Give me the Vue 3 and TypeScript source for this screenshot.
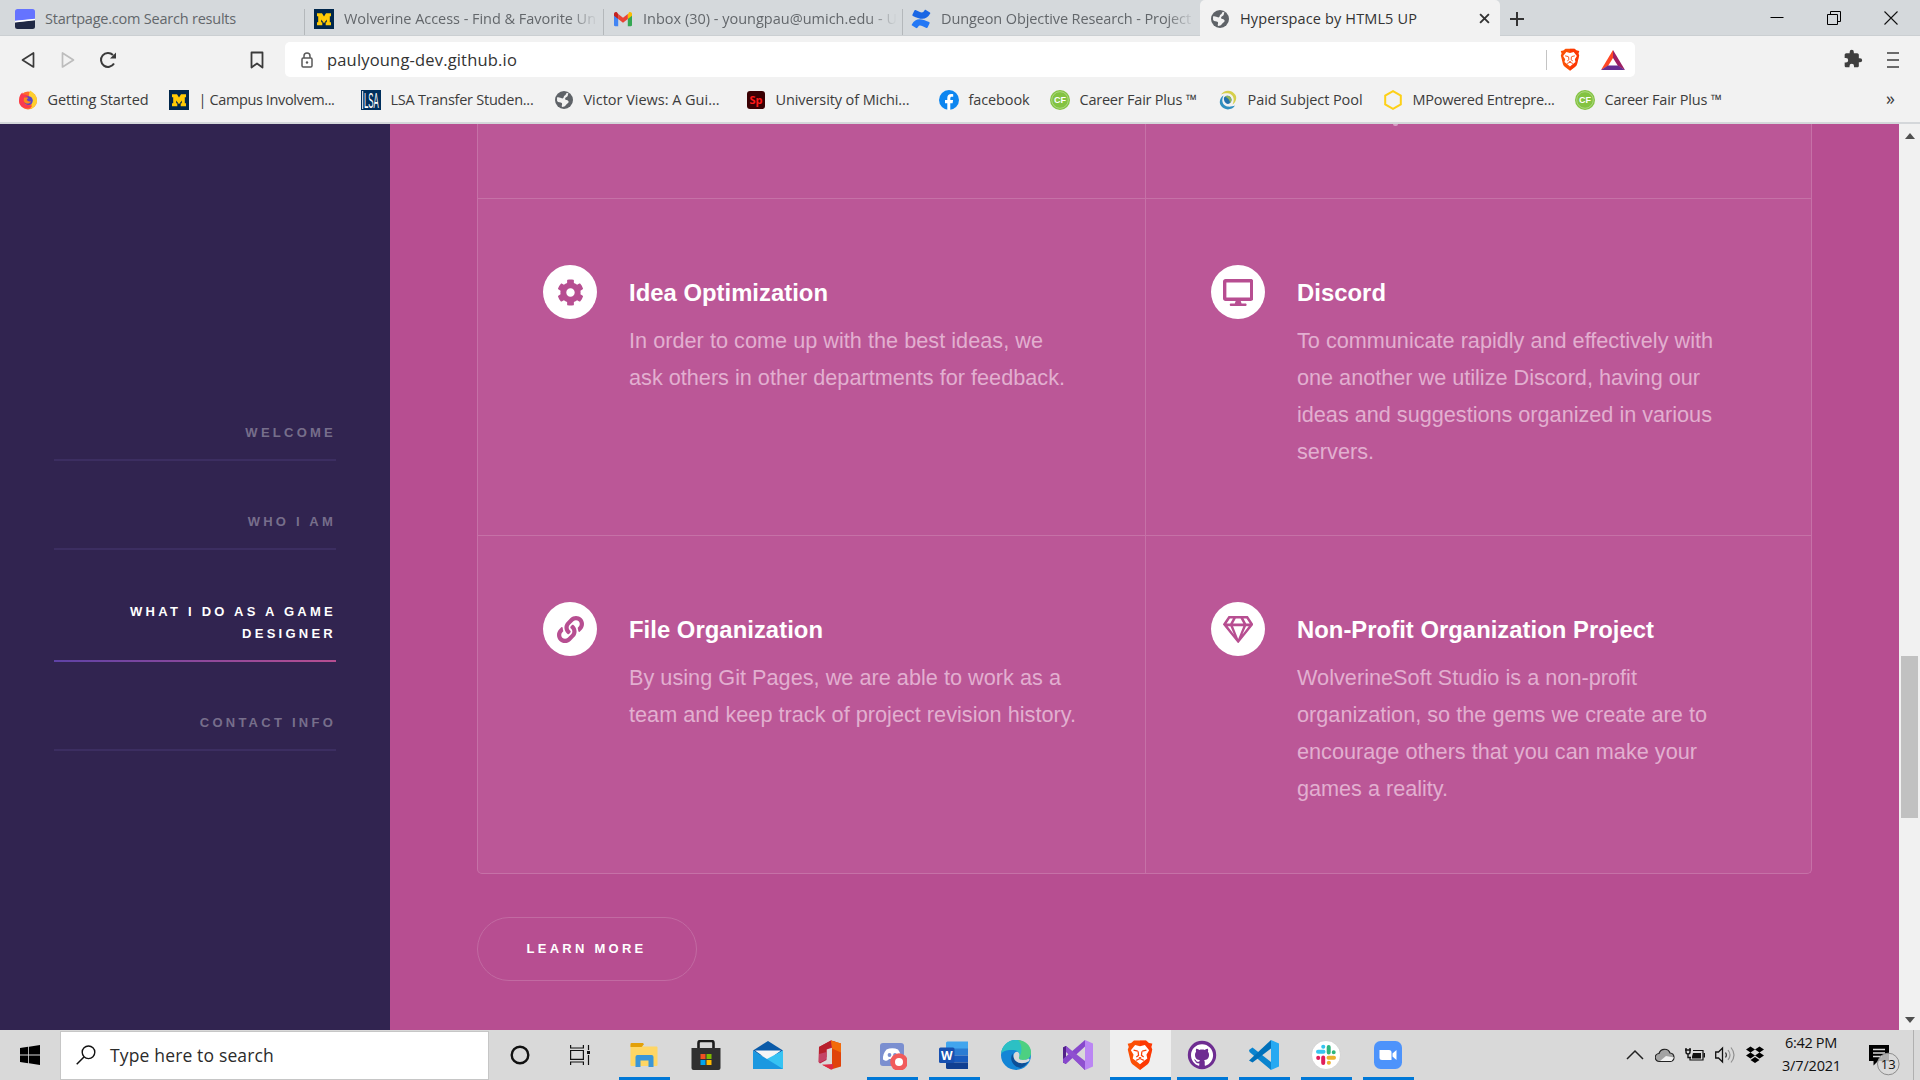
<script setup lang="ts">
import type { Directive } from 'vue'

interface Tab { title: string; icon: string; w: number; active?: boolean }
interface Bookmark { title: string; icon: string; slot: number; w: number }
interface Feature { title: string; icon: string; box: string; lines: string[]; w: number[]; tw: number }
interface TaskApp { icon: string; running: boolean; active?: boolean }

// Spreads the letters so that a label takes the given width in pixels.
const vFit: Directive<HTMLElement, number> = {
  mounted(el, { value }) {
    const natural = el.getBoundingClientRect().width
    const count = (el.textContent ?? '').length
    if (count && value) el.style.letterSpacing = `${((value - natural) / count).toFixed(3)}px`
  },
}

const globe = '<circle cx="10" cy="10" r="9" fill="#5f6368"/><path d="M3 7.500c2.500-.6 3.400.8 5.200.9 2 .1 1-2.300 2.600-2.900 1.400-.5.700-2 2.200-2.700l1.500.800c-1 .9-.2 1.900-1.200 2.900-.9 1-2.300 1-2.200 2.400.200 1.500 3 .600 3.500 2.500.4 1.500-1.800 2-2.500 3.300-.8 1.500-2.500 2.200-4 2.300-1.200-1.200.8-2.700-.3-3.900-1.300-1.200-3.500-.2-4.700-2z" fill="#f2f2f2"/>'
const block = '<rect width="20" height="20" fill="#00274c"/><path d="M3 4.200h5l2 3.300 2-3.300h5v3h-1.200v6H17v3h-5.300v-3h1.100v-2.700L10 14.200 7.200 10.500v2.700h1.100v3H3v-3h1.200v-6H3z" fill="#ffcb05"/>'
const lion = '<path d="M20 2.800 17.400.5H6.600L4 2.800.9 3.300l1 3-.9 2.300 2.500 10.200c.4 1.500 1.300 2.700 2.600 3.600L12 27l5.900-4.600c1.300-.9 2.200-2.100 2.600-3.600L23 8.600l-.9-2.300 1-3z" fill="#fb5006"/><path d="M12 .5h5.400L20 2.800l3.100.5-1 3 .9 2.300-2.500 10.200c-.4 1.500-1.300 2.700-2.600 3.600L12 27z" fill="#ff2000" opacity=".5"/><path d="M12 5.600 7.600 4.600 3.800 9.300l2.400 4-.8 3.300 3.400 2.600 3.200 2.600 3.200-2.600 3.400-2.600-.8-3.300 2.400-4-3.800-4.700z" fill="#fff"/><path d="M6.200 9.100 10 10M17.800 9.100 14 10M10.300 10.200l.4 3.600-2 1.400M13.700 10.200l-.4 3.600 2 1.400M8.600 18.300l3.400-1.600 3.400 1.600" fill="none" stroke="#fb4208" stroke-width="1.100"/><path d="m10.600 15.400h2.800L12 16.700z" fill="#fb4208"/>'

const icons: Record<string, string> = {
  startpage: '<path d="M0 2.500Q0 0 2.500 0h15Q20 0 20 2.500V10L0 12z" fill="#6573ff"/><path d="M0 13.200 20 11v6.500Q20 20 17.500 20h-15Q0 20 0 17.500z" fill="#202945"/><path d="M0 11.700 20 9.800v1.500L0 13.600z" fill="#fff"/>',
  block,
  gmail: '<path d="M1 4.500V16c0 .8.600 1.200 1.200 1.200h3V8.500z" fill="#4285f4"/><path d="M19 4.500V16c0 .8-.6 1.200-1.200 1.200h-3V8.500z" fill="#34a853"/><path d="M14.800 5.500V10L19 6.800V5c0-1.800-1.800-2.600-3.100-1.600z" fill="#fbbc04"/><path d="M5.200 10V5.100L10 8.700l4.800-3.600V10L10 13.700z" fill="#ea4335"/><path d="M1 5v1.800L5.200 10V5.100L4.100 3.400C2.800 2.400 1 3.200 1 5z" fill="#c5221f"/>',
  confluence: '<path d="M.8 15.400c-.3.500-.2.900.3 1.200l4 2.500c.5.300 1 .1 1.300-.3 1.600-2.700 2.800-2.600 5.300-1.500l3.700 1.700c.5.200 1 0 1.200-.4l2-4.300c.2-.5 0-1-.5-1.200-7.700-3.600-13.200-4.800-17.300 2.300z" fill="#2478f5"/><path d="M19.200 4.600c.3-.5.200-.9-.3-1.200l-4-2.500c-.5-.3-1-.1-1.300.3-1.600 2.700-2.800 2.600-5.300 1.500L4.600 1c-.5-.2-1 0-1.200.4l-2 4.300c-.2.500 0 1 .5 1.200 7.700 3.600 13.200 4.800 17.300-2.300z" fill="#1a66e4"/>',
  globe,
  firefox: '<circle cx="10" cy="10.500" r="9" fill="#ff6a2b"/><path d="M12 .5c4 2.300 7.500 6 7 10.800-.5 4-3.500 7-7 8 3-4 1.500-7 0-9.300S10.500 4 12 .5z" fill="#ffcf2e"/><path d="M1.500 7c.5-2 1.500-3.500 2.800-4.600L5 4.600c3-.6 5.500.6 6.500 3.400L7 14.500l7 1.500c-4 4-12 2.500-13-4.500z" fill="#fb3a4e"/><circle cx="10.500" cy="10.600" r="4.300" fill="#5b45c9"/><path d="M6 7.800c2-1 3.700-.5 4.600.5-1.400.4-1.800 1-1.800 2 1.200.5 1.700 1.800 4.200.9-.7 2.900-5.600 3.600-7.300-.2z" fill="#ff8b16"/>',
  lsa: '<rect width="20" height="20" fill="#002f5d"/><path d="M1.700 1v18" stroke="#fff"/><text transform="translate(3 17.500) scale(.98 2.650)" font-family="Liberation Sans, sans-serif" font-size="8" fill="#fff">LSA</text>',
  sp: '<rect x="1" y="1" width="18" height="18" rx="3" fill="#3a0003"/><text x="10" y="14" text-anchor="middle" font-family="Open Sans, sans-serif" font-weight="700" font-size="11" fill="#ff1a1a">Sp</text>',
  facebook: '<circle cx="10" cy="10" r="10" fill="#0d86f0"/><path d="M8.300 20v-6.800H6V10h2.300V8c0-2.700 1.500-4 3.900-4 .9 0 1.700.100 2 .2v2.600h-1.400c-1.100 0-1.500.6-1.500 1.500V10h2.800l-.5 3.200h-2.300V20z" fill="#fff"/>',
  cf: '<circle cx="10" cy="10" r="10" fill="#83c341"/><circle cx="10" cy="10" r="8.300" fill="none" stroke="#b8dc92" stroke-width=".8"/><text x="10" y="13.300" text-anchor="middle" font-family="Liberation Sans, sans-serif" font-weight="700" font-size="9" fill="#fff">CF</text>',
  swirl: '<path d="M3 4.500C6-.5 14-1 17.500 5c2 4-.500 8-3 9.500 2-4 1.500-8-1.500-10-3-2-7-1-10 0z" fill="#d6cf4b"/><path d="M17 15.500c-3 5-11 5.500-14.500-.5-2-4 .5-8 3-9.500-2 4-1.500 8 1.500 10 3 2 7 1 10 0z" fill="#2f8fc0"/><path d="M6 7.500c2.500-3 7-2 7.500 2 0 2.500-1.500 4-3.500 4.500-3-.5-4.500-3.500-4-6.500z" fill="#2371ad"/><path d="M7 6.500c3-1.500 6-.5 6.500 3 0 1.500-.5 2.500-1.500 3.500 0-3-2-5-5-6.500z" fill="#8fb45a"/>',
  hexagon: '<path d="M10 1.200 17.800 5.600v8.800L10 18.800 2.200 14.400V5.600z" fill="none" stroke="#fdd017" stroke-width="2"/>',
  lion,
  cog: '<path d="M487.400 315.700l-42.600-24.600c4.300-23.200 4.300-47 0-70.200l42.600-24.600c4.900-2.800 7.100-8.600 5.500-14-11.100-35.600-30-67.800-54.700-94.600-3.800-4.100-10-5.100-14.800-2.300L380.800 110c-17.900-15.400-38.500-27.300-60.800-35.100V25.800c0-5.600-3.900-10.500-9.400-11.700-36.700-8.200-74.300-7.800-109.200 0-5.500 1.200-9.400 6.100-9.400 11.700V75c-22.200 7.900-42.800 19.800-60.800 35.100L88.700 85.500c-4.900-2.800-11-1.900-14.800 2.300-24.700 26.700-43.600 58.900-54.700 94.600-1.700 5.400.6 11.200 5.500 14L67.300 221c-4.300 23.200-4.300 47 0 70.200l-42.600 24.600c-4.900 2.800-7.100 8.600-5.500 14 11.100 35.600 30 67.800 54.700 94.600 3.800 4.100 10 5.100 14.800 2.300l42.600-24.600c17.900 15.400 38.500 27.300 60.800 35.100v49.200c0 5.600 3.900 10.500 9.400 11.700 36.700 8.200 74.300 7.800 109.200 0 5.500-1.200 9.400-6.100 9.400-11.700v-49.200c22.200-7.900 42.800-19.800 60.800-35.100l42.600 24.600c4.900 2.800 11 1.900 14.800-2.300 24.700-26.700 43.600-58.900 54.700-94.600 1.500-5.500-.7-11.300-5.600-14.100zM256 336c-44.100 0-80-35.900-80-80s35.900-80 80-80 80 35.900 80 80-35.900 80-80 80z"/>',
  desktop: '<path d="M528 0H48C21.500 0 0 21.500 0 48v320c0 26.500 21.500 48 48 48h192l-16 48h-72c-13.300 0-24 10.700-24 24s10.700 24 24 24h272c13.300 0 24-10.700 24-24s-10.700-24-24-24h-72l-16-48h192c26.500 0 48-21.500 48-48V48c0-26.500-21.500-48-48-48zm-16 352H64V64h448v288z"/>',
  link: '<path d="M326.612 185.391c59.747 59.809 58.927 155.698.36 214.590-.11.12-.24.25-.36.37l-67.200 67.200c-59.270 59.270-155.699 59.262-214.960 0-59.270-59.260-59.270-155.700 0-214.960l37.106-37.106c9.840-9.840 26.786-3.300 27.294 10.606.648 17.722 3.826 35.527 9.690 52.721 1.986 5.822.567 12.262-3.783 16.612l-13.087 13.087c-28.026 28.026-28.905 73.660-1.155 101.960 28.024 28.579 74.086 28.749 102.325.51l67.200-67.190c28.191-28.191 28.073-73.757 0-101.830-3.701-3.694-7.429-6.564-10.341-8.569a16.037 16.037 0 0 1-6.947-12.606c-.396-10.567 3.348-21.456 11.698-29.806l21.054-21.055c5.521-5.521 14.182-6.199 20.584-1.731a152.482 152.482 0 0 1 20.522 17.197zM467.547 44.449c-59.261-59.262-155.690-59.270-214.960 0l-67.200 67.200c-.12.12-.25.25-.36.37-58.566 58.892-59.387 154.781.36 214.590a152.454 152.454 0 0 0 20.521 17.196c6.402 4.468 15.064 3.789 20.584-1.731l21.054-21.055c8.350-8.350 12.094-19.239 11.698-29.806a16.037 16.037 0 0 0-6.947-12.606c-2.912-2.005-6.640-4.875-10.341-8.569-28.073-28.073-28.191-73.639 0-101.830l67.200-67.190c28.239-28.239 74.300-28.069 102.325.51 27.750 28.300 26.872 73.934-1.155 101.960l-13.087 13.087c-4.350 4.350-5.769 10.790-3.783 16.612 5.864 17.194 9.042 34.999 9.690 52.721.509 13.906 17.454 20.446 27.294 10.606l37.106-37.106c59.271-59.259 59.271-155.699.001-214.959z"/>',
  gem: '<path d="M464 0H112c-4 0-7.700 2-9.900 5.400L2 152.800c-2.900 4.400-2.600 10.200.7 14.200l276 340.800c4.800 5.900 13.800 5.900 18.600 0l276-340.800c3.300-4.100 3.600-9.800.7-14.200L473.900 5.400C471.700 2 468 0 464 0zm-19.300 48l63.300 96h-68.400l-51.700-96h56.800zm-202.100 0h90.700l51.700 96H191l51.600-96zm-111.300 0h56.800l-51.700 96H68l63.300-96zm-43 144h51.400L208 352 88.300 192zm102.900 0h193.600L288 435.300 191.200 192zM368 352l68.200-160h51.400L368 352z"/>',
  explorer: '<path d="M1.500 5.500Q1.500 4.500 2.500 4.500H12l2 2h13.500q1 0 1 1V25q0 1-1 1h-25q-1 0-1-1z" fill="#ffd664"/><path d="M1.500 4Q1.500 3 2.500 3H14l1 1.200-2.500 2.800h-11z" fill="#e3a008"/><path d="M6.500 27V17q0-2 2-2h14q2 0 2 2v10h-5v-6.500h-8V27z" fill="#3b96d8"/>',
  store: '<path d="M7.500 9V3q0-2 2-2h11q2 0 2 2v6" fill="none" stroke="#1c1c1c" stroke-width="2.600"/><path d="M.5 8h29v20q0 2-2 2h-25q-2 0-2-2z" fill="#303030"/><path d="M9.500 14h5v5h-5z" fill="#f25022"/><path d="M15.500 14h5v5h-5z" fill="#7fba00"/><path d="M9.500 20h5v5h-5z" fill="#00a4ef"/><path d="M15.500 20h5v5h-5z" fill="#ffb900"/>',
  mail: '<path d="m0 10.500 15-9.500 15 9.500-7 5H7z" fill="#0a5aa8"/><path d="M2 10.500h26L15 20z" fill="#f6f6f6"/><path d="M30 10.500 12 20 1 29h29z" fill="#36c3f3"/><path d="M0 10.500 30 29H0z" fill="#1b98e0"/>',
  office: '<path d="M4 7 16 .5l5 1.500v4.500l-9.500 3V20L5 23.500 3.500 22z" fill="#c0203f"/><path d="M4 7 16 .5v6L11.500 9v8L4 23z" fill="#b81f2c"/><path d="M4 14v9l7.500-4v-7z" fill="#c9527f" opacity=".7"/><path d="M16 .5 26 3.500v23L16 29.500l-8.500-4.700 9.500 1V6.500z" fill="#e0430b"/><path d="M16 .5 26 3.500v9l-9-4z" fill="#f26b0a"/><path d="M7 24.800 18 24v5l-2 .5z" fill="#dd2a45"/>',
  discord: '<rect x="3" y="3" width="24" height="23" rx="3" fill="#7b8fd0"/><path d="M9.500 9.500c3.500-1.800 8-1.800 11.500 0 2.500 3.500 3.500 7 3 10-3.500 2.500-5 .500-5.500-.5h-6.500c-.5 1-2.500 3-6 .5-.5-3.500 1-7 3.500-10z" fill="#fff"/><circle cx="12.500" cy="15" r="1.900" fill="#7b8fd0"/><circle cx="18" cy="15" r="1.900" fill="#7b8fd0"/><circle cx="22" cy="22" r="8.800" fill="#f15b5b"/><circle cx="22" cy="22" r="4" fill="#fff"/>',
  word: '<path d="M7 3q0-1.500 1.500-1.500h20.500V9H7z" fill="#41a5ee"/><path d="M7 8.500h22v7H7z" fill="#2b7cd3"/><path d="M7 15.500h22v7H7z" fill="#185abd"/><path d="M7 22.500h22v6.500H8.500Q7 29 7 27.500z" fill="#103f91"/><rect x="0" y="7.500" width="15.500" height="15.500" rx="1.500" fill="#1750b0"/><text x="7.700" y="19.500" text-anchor="middle" font-family="Open Sans, sans-serif" font-weight="700" font-size="12" fill="#fff">W</text>',
  edge: '<circle cx="15" cy="15" r="15" fill="#1385d6"/><path d="M0 14C1 4 9-.5 16 0c8 .5 14 6 14 12.500 0 5-3.500 7.500-8 7.500-3 0-4.500-1-4-2.500 1.500-3-.5-7.500-5.500-7.500C7 9.500 2 10.500 0 14z" fill="#2cc0c4"/><path d="M17 .1C25 .5 30 6 30 12.500c0 5-3.500 7.500-8 7.500-3 0-4.500-1-4-2.500C21 14 22 5 17 .1z" fill="#58d66b" opacity=".75"/><path d="M11.500 13.500C8 19 12 27 19.500 28c4-1.500 6.500-4 8-6.500-8 4-15.500-.5-16-8z" fill="#0c4f97"/><path d="M12.500 16c0-3 2.500-5 4.500-4 2 2 1.500 3.500 1 5.500-.5 1.500 1 2.500 4 2.500 2 0 4-.5 6-1.500.8.500.7 1.500 0 2.500-7 4.500-15.500 1.500-15.500-5z" fill="#d9d9d9"/>',
  vs: '<path d="M0 7.500 3 6l19 17.500V30z" fill="#6b35b3"/><path d="M0 7.500 3 6v18l-3-1.500z" fill="#52218a"/><path d="M3 24 22 6.500V0L0 19v3.500z" fill="#8748cc"/><path d="M3 6 22 21v9L3 12z" fill="#8f50d0"/><path d="m22 0 8 3.500v23L22 30z" fill="#bb86f3"/>',
  github: '<circle cx="15" cy="15" r="14.200" fill="#6e2d91"/><g transform="translate(4 3.900) scale(.92)"><path fill="#fff" d="M12 .297c-6.630 0-12 5.373-12 12 0 5.303 3.438 9.800 8.205 11.385.6.113.82-.258.82-.577 0-.285-.01-1.040-.015-2.040-3.338.724-4.042-1.610-4.042-1.610C4.422 18.070 3.633 17.700 3.633 17.700c-1.087-.744.084-.729.084-.729 1.205.084 1.838 1.236 1.838 1.236 1.070 1.835 2.809 1.305 3.495.998.108-.776.417-1.305.76-1.605-2.665-.3-5.466-1.332-5.466-5.930 0-1.310.465-2.380 1.235-3.220-.135-.303-.54-1.523.105-3.176 0 0 1.005-.322 3.300 1.230.96-.267 1.980-.399 3-.405 1.020.006 2.040.138 3 .405 2.280-1.552 3.285-1.230 3.285-1.230.645 1.653.24 2.873.12 3.176.765.84 1.230 1.910 1.230 3.220 0 4.610-2.805 5.625-5.475 5.920.42.36.81 1.096.81 2.220 0 1.606-.015 2.896-.015 3.286 0 .315.210.69.825.57C20.565 22.092 24 17.592 24 12.297c0-6.627-5.373-12-12-12"/></g>',
  vscode: '<path d="M0 10 3.500 7.500 22 22v8L.5 12z" fill="#0a84cf"/><path d="M0 20.500 22 0v8.500L3.500 22.500z" fill="#0070ba"/><path d="m22 0 8 3.500v23L22 30z" fill="#27a9f2"/>',
  slack: '<circle cx="15" cy="15" r="14.500" fill="#fff" stroke="#c6c6c6" stroke-width=".6"/><g stroke-width="4" stroke-linecap="round"><path d="M7 11.700h5.500M12.200 6.700h.1" stroke="#36c5f0"/><path d="M17.700 7v5.500M22.700 12.200v.1" stroke="#2eb67d"/><path d="M17.500 17.700H23M17.800 22.800h.1" stroke="#ecb22e"/><path d="M12.200 17.500V23M7.200 17.800v.1" stroke="#e01e5a"/></g>',
  zoom: '<rect x="1" y="1" width="28" height="28" rx="6.500" fill="#4d93fb"/><path d="M6.500 10H16q2.500 0 2.500 2.500V20H9q-2.500 0-2.500-2.500z" fill="#fff"/><path d="m19.500 13.500 4-3.500v10l-4-3.500z" fill="#fff"/>',
}

const tabs: Tab[] = [
  { title: 'Startpage.com Search results', icon: 'startpage', w: 191 },
  { title: 'Wolverine Access - Find & Favorite Un', icon: 'block', w: 252 },
  { title: 'Inbox (30) - youngpau@umich.edu - U', icon: 'gmail', w: 254 },
  { title: 'Dungeon Objective Research - Project', icon: 'confluence', w: 250 },
  { title: 'Hyperspace by HTML5 UP', icon: 'globe', w: 177, active: true },
]

const bookmarks: Bookmark[] = [
  { title: 'Getting Started', icon: 'firefox', slot: 151, w: 101 },
  { title: '| Campus Involvem...', icon: 'block', slot: 192, w: 136 },
  { title: 'LSA Transfer Studen...', icon: 'lsa', slot: 193, w: 143 },
  { title: 'Victor Views: A Gui...', icon: 'globe', slot: 192, w: 136 },
  { title: 'University of Michi...', icon: 'sp', slot: 193, w: 134 },
  { title: 'facebook', icon: 'facebook', slot: 111, w: 61 },
  { title: 'Career Fair Plus ™', icon: 'cf', slot: 168, w: 117 },
  { title: 'Paid Subject Pool', icon: 'swirl', slot: 165, w: 115 },
  { title: 'MPowered Entrepre...', icon: 'hexagon', slot: 192, w: 142 },
  { title: 'Career Fair Plus ™', icon: 'cf', slot: 160, w: 117 },
]

const sections = [
  { lines: ['WELCOME'], active: false },
  { lines: ['WHO I AM'], active: false },
  { lines: ['WHAT I DO AS A GAME', 'DESIGNER'], active: true },
  { lines: ['CONTACT INFO'], active: false },
]

const features: Feature[] = [
  { title: 'Idea Optimization', icon: 'cog', box: '0 0 512 512', tw: 199,
    lines: ['In order to come up with the best ideas, we', 'ask others in other departments for feedback.'], w: [414, 436] },
  { title: 'Discord', icon: 'desktop', box: '0 0 576 512', tw: 89,
    lines: ['To communicate rapidly and effectively with', 'one another we utilize Discord, having our', 'ideas and suggestions organized in various', 'servers.'], w: [416, 403, 415, 77] },
  { title: 'File Organization', icon: 'link', box: '0 0 512 512', tw: 194,
    lines: ['By using Git Pages, we are able to work as a', 'team and keep track of project revision history.'], w: [432, 447] },
  { title: 'Non-Profit Organization Project', icon: 'gem', box: '0 0 576 512', tw: 357,
    lines: ['WolverineSoft Studio is a non-profit', 'organization, so the gems we create are to', 'encourage others that you can make your', 'games a reality.'], w: [340, 410, 400, 151] },
]

const apps: TaskApp[] = [
  { icon: 'explorer', running: true },
  { icon: 'store', running: false },
  { icon: 'mail', running: false },
  { icon: 'office', running: false },
  { icon: 'discord', running: true },
  { icon: 'word', running: true },
  { icon: 'edge', running: false },
  { icon: 'vs', running: false },
  { icon: 'lion', running: true, active: true },
  { icon: 'github', running: true },
  { icon: 'vscode', running: true },
  { icon: 'slack', running: true },
  { icon: 'zoom', running: true },
]
</script>

<template>
  <div class="screen">
    <header class="tabstrip">
      <div v-for="(t, i) in tabs" :key="i" class="tab" :class="{ active: t.active }">
        <svg class="fav" viewBox="0 0 20 20" v-html="icons[t.icon]" />
        <div class="tab-title" :class="{ faded: i > 0 && i < 4 }"><span v-fit="t.w">{{ t.title }}</span></div>
        <svg v-if="t.active" class="tab-close" viewBox="0 0 10 10"><path d="m1 1 8 8M9 1 1 9" stroke="#333" stroke-width="1.700" /></svg>
      </div>
      <svg class="plus" viewBox="0 0 16 16"><path d="M8 1v14M1 8h14" stroke="#333" stroke-width="2" /></svg>
      <div class="window-buttons">
        <svg viewBox="0 0 14 14"><path d="M.5 6.500h13" stroke="#000" /></svg>
        <svg viewBox="0 0 14 14" fill="none" stroke="#000"><path d="M.5 3.500h10v10H.5zM3.500 3V.5h10v10H11" /></svg>
        <svg viewBox="0 0 14 14"><path d="m.5.5 13 13M13.500.5l-13 13" stroke="#111" stroke-width="1.100" /></svg>
      </div>
    </header>

    <div class="toolbar">
      <svg class="back" viewBox="0 0 14 18"><path d="M12.500 2v14L1.500 9z" fill="none" stroke="#3b3b3b" stroke-width="1.700" stroke-linejoin="round" /></svg>
      <svg class="forward" viewBox="0 0 14 18"><path d="M1.500 2v14l11-7z" fill="none" stroke="#bdbdbd" stroke-width="1.700" stroke-linejoin="round" /></svg>
      <svg class="reload" viewBox="0 0 18 18"><path d="M15 12.500A7 7 0 1 1 14 4" fill="none" stroke="#3b3b3b" stroke-width="2" /><path d="M17 1.500v6h-6z" fill="#3b3b3b" /></svg>
      <svg class="ribbon" viewBox="0 0 14 18"><path d="M1.500 1.500h11v15L7 12.500l-5.500 4z" fill="none" stroke="#3b3b3b" stroke-width="1.800" stroke-linejoin="round" /></svg>
      <div class="address">
        <svg class="lock" viewBox="0 0 12 16"><rect x="1" y="6" width="10" height="9" rx="1.200" fill="none" stroke="#5a5a5a" stroke-width="1.500" /><path d="M3 6V4q0-3 3-3t3 3v2" fill="none" stroke="#5a5a5a" stroke-width="1.500" /><circle cx="6" cy="10.500" r="1.200" fill="#5a5a5a" /></svg>
        <div class="url"><span v-fit="190">paulyoung-dev.github.io</span></div>
        <i class="divider" />
        <svg class="shield" viewBox="0 0 24 27" v-html="icons.lion" />
        <svg class="bat" viewBox="0 0 24 20"><path d="M12 0 0 20l7-4 5-8z" fill="#ff4724" /><path d="m12 0 12 20-7-4-5-8z" fill="#9e1f63" /><path d="M0 20h24l-7-4.500H7z" fill="#662d91" /></svg>
      </div>
      <svg class="puzzle" viewBox="0 0 24 24"><path d="M20.500 11H19V7c0-1.100-.9-2-2-2h-4V3.500a2.500 2.500 0 0 0-5 0V5H4c-1.100 0-2 .9-2 2v3.800h1.500a2.700 2.700 0 0 1 0 5.400H2V20c0 1.100.9 2 2 2h3.800v-1.500a2.700 2.700 0 0 1 5.400 0V22H17c1.100 0 2-.9 2-2v-4h1.500a2.500 2.500 0 0 0 0-5z" fill="#3f3f3f" /></svg>
      <svg class="burger" viewBox="0 0 12 18"><path d="M0 2h12M0 9h12M0 16h12" stroke="#3f3f3f" stroke-width="1.700" /></svg>
    </div>

    <nav class="bookmarks">
      <div v-for="(b, i) in bookmarks" :key="i" class="bookmark" :style="{ width: b.slot + 'px' }">
        <svg class="fav" viewBox="0 0 20 20" v-html="icons[b.icon]" />
        <span v-fit="b.w">{{ b.title }}</span>
      </div>
      <span class="more">»</span>
    </nav>

    <main class="page">
      <aside class="sidebar">
        <div v-for="(s, i) in sections" :key="i" class="section-link" :class="{ current: s.active }">
          <div v-for="l in s.lines" :key="l">{{ l }}</div>
        </div>
      </aside>
      <section class="content">
        <div class="features">
          <div class="cell stub" />
          <div class="cell stub"><i class="descender" /></div>
          <article v-for="f in features" :key="f.title" class="cell">
            <div class="badge"><svg :viewBox="f.box" v-html="icons[f.icon]" /></div>
            <div class="copy">
              <h3><span v-fit="f.tw">{{ f.title }}</span></h3>
              <p v-for="(l, i) in f.lines" :key="i"><span v-fit="f.w[i]">{{ l }}</span></p>
            </div>
          </article>
        </div>
        <button class="learn" type="button">LEARN MORE</button>
      </section>
      <div class="scrollbar">
        <svg viewBox="0 0 10 6"><path d="M0 6h10L5 0z" fill="#505050" /></svg>
        <i class="thumb" />
        <svg viewBox="0 0 10 6"><path d="M0 0h10L5 6z" fill="#505050" /></svg>
      </div>
    </main>

    <footer class="taskbar">
      <svg class="start" viewBox="0 0 20 20"><path d="M0 2.900 8.200 1.800v7.700H0zM9 1.700 20 0v9.500H9zM0 10.400h8.200v7.800L0 17zM9 10.400h11V20L9 18.300z" /></svg>
      <div class="search">
        <svg viewBox="0 0 20 20"><circle cx="12.500" cy="7.300" r="6.300" fill="none" stroke="#111" stroke-width="1.400" /><path d="M8 12 .7 19.300" stroke="#111" stroke-width="1.500" /></svg>
        <span v-fit="164">Type here to search</span>
      </div>
      <svg class="cortana" viewBox="0 0 20 20"><circle cx="10" cy="10" r="8.300" fill="none" stroke="#111" stroke-width="2.400" /></svg>
      <svg class="taskview" viewBox="0 0 20 20" fill="none" stroke="#111" stroke-width="1.200"><path d="M.6 5.500h12.800v8.900H.6zM.6 0v3h12.800V0M.6 20v-3h12.800v3M18.500 0v5M18.500 10v10" /><path d="M17 6h3v3h-3z" fill="#111" stroke="none" /></svg>
      <div class="apps">
        <div v-for="(a, i) in apps" :key="i" class="app" :class="{ running: a.running, active: a.active }">
          <svg :viewBox="a.icon === 'lion' ? '0 0 24 27' : '0 0 30 30'" v-html="icons[a.icon]" />
        </div>
      </div>
      <div class="tray">
        <svg viewBox="0 0 20 20" fill="none" stroke="#222" stroke-width="1.500"><path d="m2 14 8-8 8 8" /></svg>
        <svg viewBox="0 0 20 20"><path d="M4.500 16.500a4 4 0 0 1-.5-8 5.800 5.800 0 0 1 11-.5 4.300 4.300 0 0 1 .5 8.500z" fill="#a3a3a3" stroke="#222" stroke-width="1.200" /><path d="m5 16 6-5 8 1.500-2.500 3.500z" fill="#f1f1f1" /></svg>
        <svg viewBox="0 0 20 20"><path d="M8 5.500h10v9.500H5v-3" fill="none" stroke="#111" stroke-width="1.200" /><path d="M18.500 8h1.500v4.500h-1.500zM8 8h8v5.500H7v-2z" fill="#111" /><path d="M1 3v4q0 2 2 2t2-2V3M3 9v3.500h3M0 5h6" fill="none" stroke="#111" stroke-width="1.400" /></svg>
        <svg viewBox="0 0 20 20" fill="none"><path d="M.7 7h2.800l4-4v14l-4-4H.7z" stroke="#111" stroke-width="1.300" /><path d="M10.500 7.500q1.800 2.500 0 5" stroke="#333" stroke-width="1.200" /><path d="M13 5q4 5 0 10M16 2.500q6 7.500 0 15" stroke="#909090" stroke-width="1.200" /></svg>
        <svg viewBox="0 0 20 20"><path d="m5.500 1.500 4.500 3-4.500 3-4.500-3zM14.500 1.500l4.500 3-4.500 3-4.500-3zM5.500 7.500l4.500 3-4.500 3-4.500-3zM14.500 7.500l4.500 3-4.500 3-4.500-3zM10 12l4.500 3L10 18l-4.500-3z" /></svg>
      </div>
      <div class="clock"><div><span v-fit="52">6:42 PM</span></div><div><span v-fit="59">3/7/2021</span></div></div>
      <div class="notify">
        <svg viewBox="0 0 32 32"><path d="M0 1h20v16H9l-4.500 4.500V17H0z" /><path d="M4 5.500h12M4 9h12M4 12.500h9" stroke="#d9d9d9" stroke-width="1.400" /><circle cx="19.300" cy="20" r="10.800" fill="#d9d9d9" fill-opacity=".8" stroke="#8d8d8d" /><text x="19.300" y="24.800" text-anchor="middle" font-family="Open Sans, sans-serif" font-size="13" fill="#111">13</text></svg>
      </div>
    </footer>
  </div>
</template>

<style>
body { margin: 0; overflow: hidden; }
</style>

<style scoped>
* { box-sizing: border-box; }
svg { display: block; flex: none; }
span { white-space: nowrap; }
.screen { width: 1920px; height: 1080px; display: flex; flex-direction: column; overflow: hidden; background: #f2f2f2; font-family: "Open Sans", "Noto Sans", sans-serif; }
.fav { width: 20px; height: 20px; }

.tabstrip { height: 36px; flex: none; display: flex; background: #d5d9dc; border-bottom: 1px solid #cbcfd2; }
.tab { width: 299px; height: 36px; flex: none; display: flex; align-items: center; padding: 1px 0 0 10px; position: relative; color: #63676b; font-size: 14.500px; }
.tab:first-child { width: 305px; padding-left: 15px; }
.tab:nth-child(2)::before, .tab:nth-child(3)::before, .tab:nth-child(4)::before { content: ""; position: absolute; left: -1px; top: 9px; width: 1px; height: 26px; background: #b4b8bb; }
.tab:nth-child(3)::before, .tab:nth-child(4)::before { left: 0; }
.tab:nth-child(2) { width: 298px; padding-left: 9px; }
.tab:nth-child(3) { width: 299px; }
.tab:nth-child(4) { width: 298px; padding-left: 9px; }
.tab.active { background: #f2f2f2; color: #333; border-radius: 5px 5px 0 0; width: 300px; }
.tab-title { width: 254px; margin-left: 10px; overflow: hidden; }
.tab-title.faded { mask-image: linear-gradient(90deg, #000 225px, transparent 254px); }
.tab.active .tab-title { width: 240px; }
.tab-close { width: 11px; height: 11px; margin-left: -1px; }
.plus { width: 16px; height: 16px; margin: 11px 0 0 9px; }
.window-buttons { margin-left: auto; display: flex; gap: 43px; padding: 11px 22px 0 0; }
.window-buttons svg { width: 14px; height: 14px; }

.toolbar { height: 41px; flex: none; display: flex; align-items: flex-end; }
.toolbar > svg { margin-bottom: 8px; }
.back { width: 14px; height: 18px; margin-left: 21px; }
.forward { width: 14px; height: 18px; margin-left: 26px; }
.reload { width: 18px; height: 18px; margin-left: 24px; }
.ribbon { width: 14px; height: 18px; margin-left: 133px; }
.address { width: 1350px; height: 35px; margin-left: 21px; border-radius: 5px; background: #fff; display: flex; align-items: center; padding-left: 16px; }
.lock { width: 12px; height: 16px; }
.url { margin-left: 14px; font-size: 16.500px; color: #333; }
.divider { width: 1px; height: 20px; margin-left: auto; background: #c4c4c4; }
.shield { width: 20px; height: 23px; margin-left: 13px; }
.bat { width: 24px; height: 20px; margin: 1px 10px 0 21px; }
.puzzle { width: 20px; height: 20px; margin-left: 208px; }
.burger { width: 12px; height: 18px; margin-left: 24px; }

.bookmarks { height: 47px; flex: none; display: flex; align-items: center; padding-left: 18px; border-bottom: 2px solid #d4d7da; color: #3c3c3c; font-size: 14.500px; }
.bookmark { display: flex; align-items: center; gap: 9.500px; flex: none; }
.more { margin: -3px 0 0 151px; font-size: 18px; line-height: 20px; }

.page { height: 906px; flex: none; display: flex; background: #b74e91; overflow: hidden; font-family: "Liberation Sans", Arial, sans-serif; }
.sidebar { width: 390px; background: #312450; padding: 19px 54px 0; display: flex; flex-direction: column; justify-content: center; gap: 50.500px; }
.section-link { text-align: right; color: rgba(255, 255, 255, .35); font-weight: 700; font-size: 13px; line-height: 22.200px; letter-spacing: 3.250px; padding-bottom: 14.500px; border-bottom: 2px solid #3c2e61; white-space: nowrap; }
.section-link.current { color: #fff; border-image: linear-gradient(90deg, #5e42a6, #b74e91) 1; }

.content { width: 1509px; padding-left: 87px; }
.features { width: 1335px; height: 750px; display: grid; grid-template-columns: 667px 1fr; grid-template-rows: 74px 337px 338px; border: 1px solid #c671a7; border-top: 0; border-radius: 0 0 5px 5px; background: #bb5797; }
.cell { padding: 66px 0 0 65px; border-top: 1px solid #c671a7; display: flex; }
.cell:nth-child(even) { border-left: 1px solid #c671a7; }
.cell.stub { border-top: 0; padding: 0; }
.descender { width: 5px; height: 2px; margin-left: 247px; background: #d6a0c4; border-radius: 0 0 2px 2px; }
.badge { width: 54px; height: 54px; flex: none; border-radius: 50%; background: #fff; display: flex; align-items: center; justify-content: center; }
.badge svg { height: 27px; fill: #b74e91; }
.copy { margin-left: 32px; color: #e2afd0; }
h3 { margin: 10px 0 11px; font-size: 23.830px; line-height: 36px; color: #fff; }
p { margin: 0; font-size: 21.670px; line-height: 37px; }
.learn { display: block; width: 220px; height: 64px; margin-top: 43px; padding: 0 1px 2px 0; border: 1px solid #c26aa2; border-radius: 32px; background: none; color: #fff; font: 700 13px "Liberation Sans", Arial, sans-serif; letter-spacing: 3.250px; white-space: nowrap; }

.scrollbar { width: 21px; background: #f1f1f1; display: flex; flex-direction: column; align-items: center; }
.scrollbar svg { width: 10px; height: 6px; margin-top: 9px; }
.thumb { width: 17px; height: 162px; margin-top: 517px; background: #c1c1c1; }
.scrollbar svg:last-child { margin-top: 199px; }

.taskbar { height: 50px; flex: none; display: flex; align-items: center; background: #d9d9d9; }
.start { width: 20px; height: 20px; margin-left: 20px; }
.search { width: 429px; height: 49px; margin-left: 20px; padding: 0 0 1px 15px; display: flex; align-items: center; background: #fff; border: 1px solid #c6c6c6; font-size: 17.500px; color: #2b2b2b; }
.search svg { width: 20px; height: 20px; margin-right: 14px; }
.cortana { width: 20px; height: 20px; margin-left: 21px; }
.taskview { width: 20px; height: 20px; margin-left: 40px; }
.apps { display: flex; height: 50px; margin-left: 24px; }
.app { width: 62px; display: flex; justify-content: center; align-items: center; position: relative; }
.app svg { width: 30px; height: 30px; margin-right: 2px; }
.app.running::after { content: ""; position: absolute; left: 5px; right: 6px; bottom: 0; height: 3px; background: #0078d7; }
.app.active { background: #efefef; border-right: 1px solid #d9d9d9; }
.app.active::after { left: 0; right: 0; }
.tray { display: flex; gap: 10px; margin-left: 205px; }
.tray svg { width: 20px; height: 20px; }
.clock { width: 76px; margin: -2px 0 0 8px; text-align: center; font-size: 14.500px; line-height: 23px; color: #111; }
.clock div:last-child { padding-left: 1px; }
.notify { height: 50px; margin-left: 20px; padding: 14px 12px 0 0; border-right: 1px solid #b0b0b0; }
.notify svg { width: 32px; height: 32px; }
</style>
